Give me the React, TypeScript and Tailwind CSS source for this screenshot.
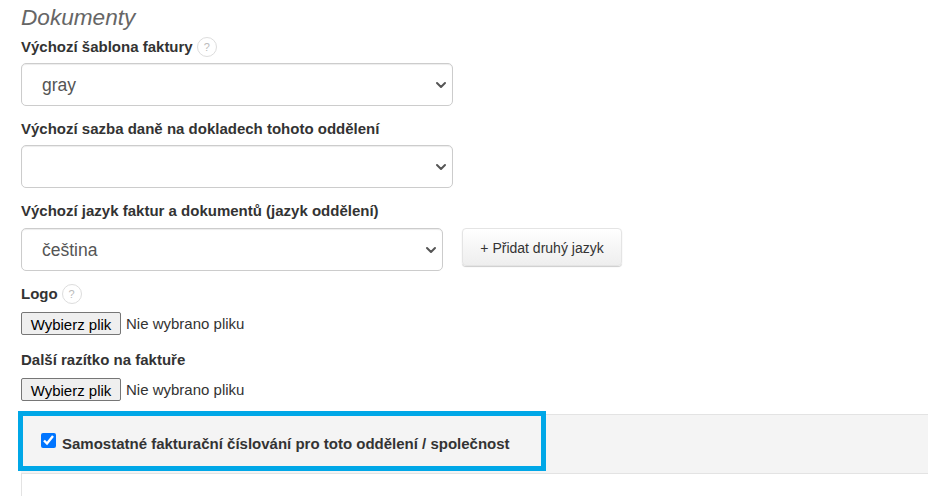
import { ChevronDown } from 'lucide-react'

const sans = "font-['Liberation_Sans',Arial,sans-serif]"

function Help() {
  return (
    <span className="ml-1 inline-flex h-5 w-5 items-center justify-center rounded-full border border-[#dddddd] bg-white text-[11px] font-normal text-[#bbbbbb]">
      ?
    </span>
  )
}

function Label({ children }: { children: React.ReactNode }) {
  return <label className="flex h-5 items-center text-[15px] font-bold leading-5 text-[#333333]">{children}</label>
}

function Select({ value, className }: { value: string; className: string }) {
  return (
    <div className={`relative ${className}`}>
      <select
        defaultValue={value}
        className="block h-[43px] w-full appearance-none rounded-[5px] border border-[#cccccc] bg-white pl-[20px] pr-6 pt-[2px] text-[17.5px] text-[#555555] shadow-[inset_0_1px_1px_rgba(0,0,0,0.075)]"
      >
        <option value={value}>{value}</option>
      </select>
      <ChevronDown className="pointer-events-none absolute right-1 top-[14px] h-4 w-4 text-[#555555]" strokeWidth={3} />
    </div>
  )
}

function FilePicker() {
  return (
    <div className="flex h-[23px] items-center text-[15px] text-[#333333]">
      <button className="h-[23px] w-[100px] rounded-[2px] border border-[#767676] bg-[#efefef] pt-px text-[15px] text-black">Wybierz plik</button>
      <span className="ml-[5px] pt-px">Nie wybrano pliku</span>
    </div>
  )
}

export default function App() {
  return (
    <div className={`h-[496px] w-[928px] overflow-hidden bg-white pl-[21px] ${sans}`}>
      <h3 className="h-[30px] pt-[6px] text-[22.6px] italic leading-6 text-[#666666]">Dokumenty</h3>
      <div className="mt-[7px]">
        <Label>
          Výchozí šablona faktury <Help />
        </Label>
      </div>
      <Select value="gray" className="mt-[6px] w-[432px]" />

      <div className="mt-[13px]">
        <Label>Výchozí sazba daně na dokladech tohoto oddělení</Label>
      </div>
      <Select value="" className="mt-[6px] w-[432px]" />

      <div className="mt-[13px]">
        <Label>Výchozí jazyk faktur a dokumentů (jazyk oddělení)</Label>
      </div>
      <div className="mt-[7px] flex items-start">
        <Select value="čeština" className="w-[422px]" />
        <button className="ml-[19px] h-[38px] w-[160px] rounded-[4px] border border-[#e4e4e4] bg-gradient-to-b from-white to-[#eeeeee] pt-[2px] text-sm text-[#333333] shadow-[0_1px_1px_rgba(0,0,0,0.2)]">
          + Přidat druhý jazyk
        </button>
      </div>

      <div className="mt-[13px]">
        <Label>
          Logo <Help />
        </Label>
      </div>
      <div className="mt-[8px]">
        <FilePicker />
      </div>

      <div className="mt-[15px]">
        <Label>Další razítko na faktuře</Label>
      </div>
      <div className="mt-[8px]">
        <FilePicker />
      </div>

      <div className="relative mt-[13px] h-[60px] border-y border-[#e3e3e3] bg-[#f4f4f4]">
        <label className="flex h-full items-center pl-[20px] text-[15px] font-bold text-[#333333]">
          <input type="checkbox" defaultChecked className="mb-[7px] h-[15px] w-[15px] accent-[#0075ff]" />
          <span className="ml-[6px]">Samostatné fakturační číslování pro toto oddělení / společnost</span>
        </label>
        <div className="absolute -left-[3px] -top-[4px] h-[60px] w-[528px] border-[5px] border-[#00a7e7]" />
      </div>
      <div className="h-[30px] border-l border-[#e3e3e3]" />
    </div>
  )
}
